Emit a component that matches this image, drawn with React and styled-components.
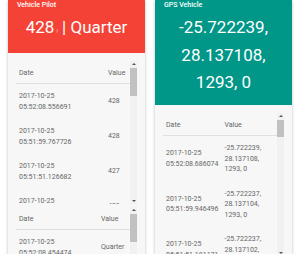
import styled, { createGlobalStyle } from 'styled-components';

const GlobalStyle = createGlobalStyle`
  html, body {
    margin: 0;
    padding: 0;
    background: #fff;
    overflow: hidden;
  }
  body {
    padding: 0 8px;
    font-family: Roboto, 'Liberation Sans', sans-serif;
  }
`;

const pilotValues = [
  ['05:52:08.556691', '428'],
  ['05:51:59.767726', '428'],
  ['05:51:51.126682', '427'],
  ['05:51:42.361204', '428'],
  ['05:51:33.598317', '428'],
  ['05:51:24.840112', '427'],
  ['05:51:16.073569', '428'],
  ['05:51:07.309845', '428'],
  ['05:50:58.551237', '427'],
  ['05:50:49.786420', '428'],
  ['05:50:41.021963', '428'],
  ['05:50:32.258714', '428'],
];

const pilotQuarters = [
  '05:52:08.454474',
  '05:51:59.665120',
  '05:51:51.024336',
  '05:51:42.259418',
  '05:51:33.496502',
  '05:51:24.738127',
  '05:51:15.971603',
  '05:51:07.207751',
].map((time) => [time, 'Quarter']);

const gpsValues = [
  ['05:52:08.686074', '-25.722239, 28.137108, 1293, 0'],
  ['05:51:59.946496', '-25.722237, 28.137104, 1293, 0'],
  ['05:51:51.181171', '-25.722237, 28.137102, 1293, 0'],
  ['05:51:42.416538', '-25.722236, 28.137101, 1293, 0'],
  ['05:51:33.652907', '-25.722236, 28.137099, 1293, 0'],
];

// the table boxes show a classic scrollbar on their right side
const ScrollBar = ({ thumb }) => (
  <Track>
    <ArrowButton>
      <Arrow $up />
    </ArrowButton>
    <Thumb $height={thumb} />
    <TrackRest />
    <ArrowButton>
      <Arrow />
    </ArrowButton>
  </Track>
);

const HistoryTable = ({ rows, valueWidth, thumb }) => {
  return (
    <ScrollBox>
      <TableArea>
        <Table>
          <thead>
            <tr>
              <Th>Date</Th>
              <Th $width={valueWidth}>Value</Th>
            </tr>
          </thead>
          <tbody>
            {rows.map(([time, value]) => (
              <tr key={time}>
                <Td>
                  2017-10-25
                  <br />
                  {time}
                </Td>
                <Td>{value}</Td>
              </tr>
            ))}
          </tbody>
        </Table>
      </TableArea>
      <ScrollBar thumb={thumb} />
    </ScrollBox>
  );
};

const App = () => {
  return (
    <>
      <GlobalStyle />
      <Dashboard>
        <Card>
          <CardHeader $color='#f44336'>
            <Title>Vehicle Pilot</Title>
            <BigValue>
              428<Unit>l</Unit> | Quarter
            </BigValue>
          </CardHeader>
          <CardBody>
            <HistoryTable rows={pilotValues} valueWidth={19} thumb={28} />
            <HistoryTable rows={pilotQuarters} valueWidth={26} thumb={28} />
          </CardBody>
        </Card>
        <Card>
          <CardHeader $color='#009688'>
            <Title>GPS Vehicle</Title>
            <BigValue>-25.722239, 28.137108, 1293, 0</BigValue>
          </CardHeader>
          <CardBody>
            <HistoryTable rows={gpsValues} valueWidth={50} thumb={17} />
          </CardBody>
        </Card>
      </Dashboard>
    </>
  );
};

const Dashboard = styled.div`
  display: grid;
  grid-template-columns: 1fr 1fr;
  column-gap: 10px;
  align-items: start;
`;

const Card = styled.div`
  display: flex;
  flex-direction: column;
  background: #f7f7f7;
  box-shadow: 0 1px 3px rgba(0, 0, 0, 0.25);
  min-height: 300px;
`;

const CardHeader = styled.div`
  background: ${({ $color }) => $color};
  color: #fff;
  padding: 1px 9px 8px;
`;

const Title = styled.div`
  font-size: 7px;
  line-height: 9px;
  font-weight: 500;
`;

const BigValue = styled.div`
  font-size: 17px;
  line-height: 27.5px;
  text-align: center;
  margin-top: 4px;
`;

const Unit = styled.span`
  font-size: 6px;
  opacity: 0.6;
  margin-left: 2px;
`;

const CardBody = styled.div`
  display: flex;
  flex-direction: column;
  gap: 3px;
  padding: 8px 8px 0;
`;

const ScrollBox = styled.div`
  display: flex;
  height: 143px;
  overflow: hidden;
`;

const TableArea = styled.div`
  flex: 1;
  min-width: 0;
  overflow: hidden;
`;

const Track = styled.div`
  display: flex;
  flex-direction: column;
  width: 7px;
  flex-shrink: 0;
  background: #f1f1f1;
`;

const ArrowButton = styled.div`
  display: flex;
  align-items: center;
  justify-content: center;
  height: 6px;
  flex-shrink: 0;
`;

const Arrow = styled.div`
  width: 0;
  height: 0;
  border-left: 2px solid transparent;
  border-right: 2px solid transparent;
  ${({ $up }) =>
    $up ? 'border-bottom: 2px solid #555;' : 'border-top: 2px solid #555;'}
`;

const Thumb = styled.div`
  height: ${({ $height }) => $height}px;
  margin-top: 1px;
  background: #c1c1c1;
  flex-shrink: 0;
`;

const TrackRest = styled.div`
  flex: 1;
`;

const Table = styled.table`
  width: 100%;
  border-collapse: collapse;
  font-size: 7px;
  line-height: 10.5px;
  color: #666;
`;

const Th = styled.th`
  text-align: left;
  font-weight: 400;
  padding: 7px 3px 5px;
  border-bottom: 1px solid #e0e0e0;
  width: ${({ $width }) => ($width ? `${$width}px` : 'auto')};
`;

const Td = styled.td`
  padding: 7px 3px;
  vertical-align: middle;
`;

export default App;
